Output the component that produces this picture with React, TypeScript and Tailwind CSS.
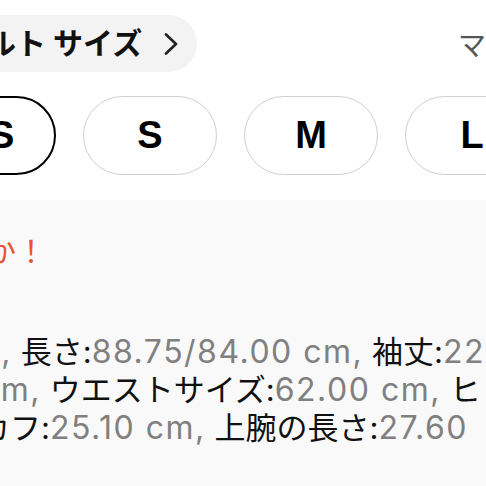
const textFont = { fontFamily: 'Inter, "Noto Sans CJK JP", sans-serif' };
const btnFont = { fontFamily: '"Liberation Sans", Inter, sans-serif' };

const sizes = ["XS", "S", "M", "L"];

function Label({ children }: { children: string }) {
  return <span className="text-[#111]">{children}</span>;
}

function Value({ children }: { children: string }) {
  return <span className="text-[32px] tracking-[1.5px] text-[#808080]">{children}</span>;
}

export default function App() {
  return (
    <div className="h-[486px] w-[486px] overflow-hidden bg-white" style={textFont}>
      <div className="flex h-[88px] items-start pt-[15px]">
        <div className="-ml-[128px] flex h-[57px] shrink-0 items-center whitespace-nowrap rounded-full bg-[#f3f3f3] pl-6 pr-[19px]">
          <span className="text-[30px] font-bold text-[#111]">デフォルト サイズ</span>
          <svg width="14" height="22" viewBox="0 0 14 22" className="ml-[22px]">
            <path d="M2 1.5 L12 11 L2 20.5" fill="none" stroke="#222" strokeWidth="2.6" strokeLinecap="round" strokeLinejoin="round" />
          </svg>
        </div>
        <div className="ml-auto w-[28px] shrink-0 whitespace-nowrap pt-[10px] text-[28px] text-[#555]">
          マイサイズ
        </div>
      </div>

      <div className="-ml-[78px] flex gap-[27px] pt-[8px]" style={btnFont}>
        {sizes.map((s, i) => (
          <div
            key={s}
            className={
              i === 0
                ? "flex h-[79px] w-[134px] shrink-0 items-center justify-center rounded-full border-[2.5px] border-black text-[38px] font-bold text-black"
                : "flex h-[79px] w-[134px] shrink-0 items-center justify-center rounded-full border-[1.5px] border-[#cfcfcf] text-[38px] font-bold text-black"
            }
          >
            {s}
          </div>
        ))}
      </div>

      <div className="mt-[25px] h-[300px] bg-[#f9f9f9] pt-[29px]">
        <p className="-ml-[74px] whitespace-nowrap text-[30px] leading-[45px] text-[#e6552f]">
          ですか！
        </p>
        <div className="mt-[59px] flex flex-col whitespace-nowrap text-[31px] leading-[38px]">
          <p className="-ml-[48px]">
            <Value>cm,</Value>
            <Label> 長さ:</Label>
            <Value>88.75/84.00 cm,</Value>
            <Label> 袖丈:</Label>
            <Value>22.00 cm,</Value>
          </p>
          <p className="-ml-[19px]">
            <Value>cm,</Value>
            <Label> ウエストサイズ:</Label>
            <Value>62.00 cm,</Value>
            <Label> ヒップ:</Label>
          </p>
          <p className="-ml-[21px]">
            <Label>カフ:</Label>
            <Value>25.10 cm,</Value>
            <Label> 上腕の長さ:</Label>
            <Value>27.60</Value>
          </p>
        </div>
      </div>
    </div>
  );
}
